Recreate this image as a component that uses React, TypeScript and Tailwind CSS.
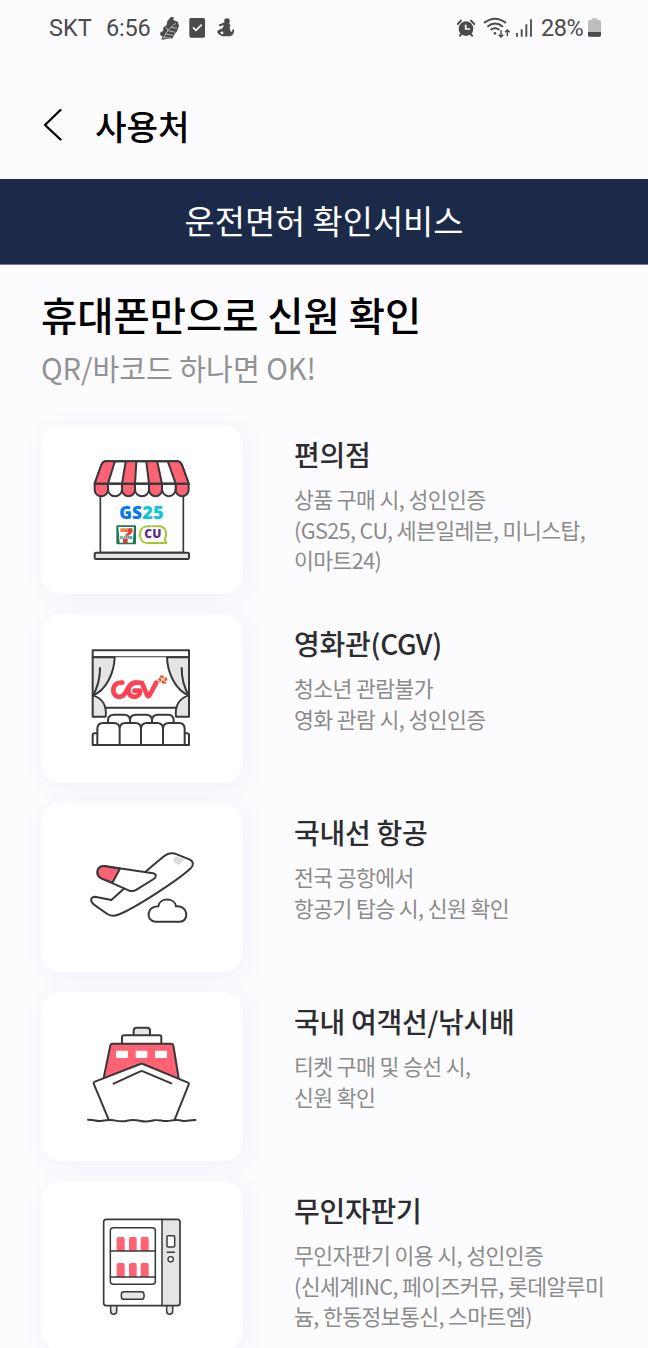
import type { ReactNode } from 'react'

type Place = {
  title: string
  lines: string[]
  viewBox: string
  art: ReactNode
}

const INK = '#38383a'
const PINK = '#ff6272'

const storeArt = (
  <>
    <path d="M61 130V308H310V130" fill="#fff" strokeWidth="5" />
    <path d="M78 34H290Q302 34 307 48L326 101H44L63 48Q68 34 78 34Z" fill="#fff" />
    <path d="M78 34H104L84 101H44L63 48Q68 34 78 34ZM137 34H169L165 101H126ZM199 34H232L246 101H207ZM264 34H290Q302 34 307 48L326 101H287Z" fill={PINK} stroke="none" />
    <path d="M44 101H84V119A20 20 0 0 1 44 119ZM126 101H165V119A19.500 19.500 0 0 1 126 119ZM207 101H246V119A19.500 19.500 0 0 1 207 119ZM287 101H326V119A19.500 19.500 0 0 1 287 119Z" fill={PINK} />
    <path d="M84 101H126V118A21 21 0 0 1 84 118ZM165 101H207V118A21 21 0 0 1 165 118ZM246 101H287V118A20.500 20.500 0 0 1 246 118Z" fill="#fff" />
    <path d="M78 34H290Q302 34 307 48L326 101H44L63 48Q68 34 78 34ZM104 36L84 101M137 36L126 101M169 36L165 101M199 36L207 101M232 36L246 101M264 36L287 101" />
    <rect x="44" y="308" width="283" height="19" rx="4" fill="#e5e5e5" />
    <g stroke="none" fontFamily="Open Sans, sans-serif" fontWeight="800">
      <text x="118" y="208" fontSize="54" textLength="68" lengthAdjust="spacingAndGlyphs" fill="#0878ed">GS</text>
      <text x="187" y="208" fontSize="54" textLength="64" lengthAdjust="spacingAndGlyphs" fill="#13c5d4">25</text>
      <rect x="109" y="226" width="59" height="57" rx="3" fill="#187a5b" />
      <path d="M115 231H162L158 278H119Z" fill="#fff" />
      <path d="M145 246H157L143 262V280H129V262Z" fill="#dc3b3f" />
      <path d="M121 235H157V246H121Z" fill="#f0803c" />
      <path d="M145 235H157V246H145Z" fill="#dc3b3f" />
      <rect x="118" y="257" width="41" height="10" fill="#fff" />
      <text x="120" y="266" fontSize="11" textLength="37" lengthAdjust="spacingAndGlyphs" fill="#187a5b">ELEVEN</text>
      <text x="193" y="265" fontSize="34" textLength="51" lengthAdjust="spacingAndGlyphs" fill="#5b2d87">CU</text>
    </g>
    <path d="M212 229H202C188 229 180 240 180 254S188 279 202 279H259L254 268C264 250 256 229 238 229H219" stroke="#a5c63b" />
  </>
)

const cinemaArt = (
  <>
    <rect x="38" y="31" width="289" height="21" fill="#fff" />
    <path d="M38 52H327V205H38Z" fill="#fff" stroke="none" />
    <path d="M38 52H104C103 98 78 151 39 166C68 175 81 199 77 230H38Z" fill="#e5e5e5" />
    <path d="M327 52H261C262 98 287 151 326 166C297 175 284 199 288 230H327Z" fill="#e5e5e5" />
    <path d="M39 166C53 142 60 115 60 84M326 166C312 142 305 115 305 84M76 203H289" />
    <path d="M84 250V242Q84 224 102 224H132Q150 224 150 242V250M150 250V242Q150 224 168 224H198Q216 224 216 242V250M216 250V242Q216 224 234 224H264Q281 224 281 242V250" fill="#fff" />
    <path d="M52 315H38V286Q38 280 44 280H52M314 315H327V286Q327 280 321 280H314" fill="#fff" />
    <path d="M52 315V267Q52 249 70 249H101Q119 249 119 267V315ZM119 315V267Q119 249 137 249H166Q183 249 183 267V315ZM183 315V267Q183 249 201 249H231Q249 249 249 267V315ZM249 315V267Q249 249 267 249H297Q314 249 314 267V315Z" fill="#fff" />
    {/* CGV wordmark strokes */}
    <g stroke="#fb4355" strokeWidth="14">
      <path d="M127 128C109 125 100 138 100 151C100 166 112 173 125 169C142 163 140 131 166 128H178" />
      <path d="M166 128C139 131 139 170 161 170C176 170 181 160 180 152H163" />
      <path d="M186 129L201 165Q205 173 209 165L229 128" />
    </g>
    <g strokeWidth="5">
      <path d="M248 108V113M248 123V128" stroke="#e9443e" />
      <path d="M239 114L243 117M253 121L258 124M258 113L253 116M243 121L239 125" stroke="#f08a3c" />
      <path d="M242 109L246 111M257 118H260M250 127L255 129M237 119H240" stroke="#d8463d" />
    </g>
  </>
)

const flightArt = (
  <>
    <path d="M198 124L248 82C261 70 278 67 291 73L328 88C342 94 341 106 332 115C292 153 151 243 112 255C101 259 91 257 82 252L45 226C29 216 30 201 45 200L94 210L130 178Z" fill="#fff" />
    <path d="M279 88L290 78L315 88L296 105L281 97Z" fill="#dcdcdc" stroke="none" />
    <path d="M72 108L219 130C230 132 230 141 221 147L171 178C162 184 156 186 146 181L66 146C45 136 49 109 72 108Z" fill="#fff" />
    <path d="M72 108L120 116L97 158L66 146C45 136 49 109 72 108Z" fill={PINK} />
    <path d="M226 275C198 275 197 228 235 229C238 202 285 202 288 229C327 226 327 275 300 275Z" fill="#fff" />
  </>
)

const shipArt = (
  <>
    <path d="M161 61V47Q161 38 170 38H201Q210 38 210 47V61" fill="#e5e5e5" />
    <path d="M126 86V67Q126 61 132 61H238Q244 61 244 67V86" fill="#fff" />
    <path d="M71 189L91 91Q92 86 98 86H273Q279 86 280 91L296 189Z" fill={PINK} />
    <g fill="#fff" stroke="none">
      <rect x="108" y="107" width="36" height="22" rx="3" />
      <rect x="167" y="107" width="35" height="22" rx="3" />
      <rect x="225" y="107" width="36" height="22" rx="3" />
    </g>
    <path d="M86 314L41 206Q40 202 45 200L181 147Q185 145 189 147L324 203Q328 205 326 209L284 314" fill="#fff" />
    <path d="M101 206L181 169Q185 167 189 169L274 205" />
    <path d="M24 314C46 314 47 320 61 318S88 314 101 316S125 321 141 317S166 314 183 318S207 319 222 316S247 320 263 318S290 313 306 317S329 314 346 315" />
  </>
)

const vendingArt = (
  <>
    <path d="M62 302V319Q62 328 71 328T80 319V302M230 302V319Q230 328 239 328T248 319V302" fill="#e5e5e5" strokeWidth="4.500" />
    <path d="M216 43H261Q270 43 270 52V293Q270 302 261 302H216Z" fill="#e5e5e5" stroke="none" />
    <path d="M216 43H50Q41 43 41 52V293Q41 302 50 302H216Z" fill="#fff" stroke="none" />
    <rect x="41" y="43" width="229" height="259" rx="8" strokeWidth="5" />
    <path d="M216 43V302" strokeWidth="4.500" />
    <rect x="61" y="68" width="135" height="170" rx="9" strokeWidth="4.500" />
    <g fill={PINK} stroke="none">
      <path d="M80 138V101Q80 96 85 96H99Q104 96 104 101V138ZM117 138V101Q117 96 122 96H135Q140 96 140 101V138ZM152 138V101Q152 96 157 96H171Q176 96 176 101V138Z" />
      <path d="M80 216V180Q80 174 85 174H99Q104 174 104 180V216ZM117 216V180Q117 174 122 174H135Q140 174 140 180V216ZM152 216V180Q152 174 157 174H171Q176 174 176 180V216Z" />
    </g>
    <path d="M61 138H196M61 216H196M232 142H253" strokeWidth="4.500" />
    <rect x="94" y="260" width="68" height="23" rx="8" fill="#e5e5e5" strokeWidth="4.500" />
    <rect x="231" y="92" width="23" height="34" rx="3" fill="#fff" strokeWidth="4.500" />
    <circle cx="242" cy="163" r="8" fill="#fff" strokeWidth="4" />
  </>
)

const places: Place[] = [
  {
    title: '편의점',
    lines: ['상품 구매 시, 성인인증', '(GS25, CU, 세븐일레븐, 미니스탑,', '이마트24)'],
    viewBox: '-117 -75 606 507',
    art: storeArt,
  },
  {
    title: '영화관(CGV)',
    lines: ['청소년 관람불가', '영화 관람 시, 성인인증'],
    viewBox: '-117 -78 606 507',
    art: cinemaArt,
  },
  {
    title: '국내선 항공',
    lines: ['전국 공항에서', '항공기 탑승 시, 신원 확인'],
    viewBox: '-117 -81 606 507',
    art: flightArt,
  },
  {
    title: '국내 여객선/낚시배',
    lines: ['티켓 구매 및 승선 시,', '신원 확인'],
    viewBox: '-117 -69 606 507',
    art: shipArt,
  },
  {
    title: '무인자판기',
    lines: ['무인자판기 이용 시, 성인인증', '(신세계INC, 페이즈커뮤, 롯데알루미', '늄, 한동정보통신, 스마트엠)'],
    viewBox: '-147 -72 606 507',
    art: vendingArt,
  },
]

function StatusBar() {
  return (
    <div className="flex h-[58px] items-center pl-[49px] pr-[47px] font-[Roboto,sans-serif] text-[23.5px] leading-none text-[#4b4b4d]">
      <span className="w-[57px]">SKT</span>
      <span className="w-[53px] tracking-[-0.2px]">6:56</span>
      <svg className="h-6 w-[21px]" viewBox="477 51 63 72">
        <path d="M510 54L515 48L521 52L520 60L533 65L537 77L531 94L522 105L518 115L484 119L488 110L480 104L482 96L490 93L489 84L500 75L502 63Z" fill="#4b4b4d" />
        <path d="M528 70Q505 83 491 114M504 92L499 82M514 82L531 85M505 92L526 97M497 102L520 106M491 113L514 114" fill="none" stroke="#fcfcfe" strokeWidth="1.800" />
      </svg>
      <svg className="ml-[9px] h-6 w-4" viewBox="569 51 48 72">
        <rect x="570" y="54" width="47" height="59" rx="5" fill="#4b4b4d" />
        <path d="M581 82L590 91L607 74" fill="none" stroke="#fff" strokeWidth="5" />
      </svg>
      <svg className="ml-3 h-6 w-[17px]" viewBox="652 51 51 72">
        <circle cx="682" cy="63" r="8.500" fill="#4b4b4d" />
        <path d="M657 74L671 68L678 67H687L692 76L690 85L693 94L698 97L697 90L702 88L704 95L699 104L692 109H668L657 103L652 96L656 90L666 86L671 81L672 76L659 79Z" fill="#4b4b4d" />
        <path d="M662 97L669 94L672 101L665 103Z" fill="#fcfcfe" />
      </svg>
      <svg className="ml-auto h-6 w-[18px]" viewBox="399 51 54 72">
        <circle cx="426" cy="86" r="22" fill="#4b4b4d" />
        <path d="M401 72L411 62M451 72L441 62M408 107L413 101M444 107L439 101" stroke="#4b4b4d" strokeWidth="6" strokeLinecap="round" />
        <path d="M425 74V87H438" fill="none" stroke="#fff" strokeWidth="5" />
      </svg>
      <svg className="ml-[8px] h-6 w-[27px]" viewBox="477 51 81 72" fill="none" stroke="#4b4b4d">
        <path d="M480 69Q513 43 546 69M490 80Q513 61 537 80M500 90Q513 80 526 90" strokeWidth="6" />
        <circle cx="513" cy="100" r="4" fill="#4b4b4d" stroke="none" />
        <path d="M531 91V110M524 104L531 111L538 104M550 108V90M543 97L550 90L557 97" strokeWidth="4.500" />
      </svg>
      <svg className="ml-[6px] h-6 w-[17px]" viewBox="576 51 51 72" stroke="#4b4b4d" strokeWidth="5.500">
        <path d="M579 99V110M593 88V110M607 73V110M621 58V110" />
      </svg>
      <span className="ml-[8px] w-[46px] tracking-[-0.5px]">28%</span>
      <svg className="ml-px h-6 w-[13px]" viewBox="792 51 39 72">
        <path d="M803 55H819V60H826Q831 60 831 65V105Q831 110 826 110H797Q792 110 792 105V65Q792 60 797 60H803Z" fill="#bdbdbf" />
        <path d="M792 96H831V105Q831 110 826 110H797Q792 110 792 105Z" fill="#4b4b4d" />
      </svg>
    </div>
  )
}

function PlaceRow({ title, lines, viewBox, art }: Place) {
  return (
    <li className="flex h-[169px] gap-[51px]">
      <div className="w-[202px] shrink-0 rounded-[20px] bg-white shadow-[4px_4px_24px_rgba(90,70,200,0.06)]">
        <svg
          className="h-full w-full"
          viewBox={viewBox}
          fill="none"
          stroke={INK}
          strokeWidth="6"
          strokeLinecap="round"
          strokeLinejoin="round"
        >
          {art}
        </svg>
      </div>
      <div className="pt-2">
        <h3 className="text-[28px] font-medium leading-[42px] tracking-[-0.01em] text-[#2d2d2f]">{title}</h3>
        <p className="mt-[9px] whitespace-nowrap text-[21.600px] leading-[30.600px] tracking-[-0.028em] text-[#8b8b8b]">
          {lines.map((line) => (
            <span key={line} className="block">{line}</span>
          ))}
        </p>
      </div>
    </li>
  )
}

export default function App() {
  return (
    <div className="h-[1348px] w-[648px] overflow-hidden bg-[#fcfcfe] font-['Noto_Sans_CJK_KR',sans-serif]">
      <StatusBar />
      <header className="flex h-[121px] items-center gap-[33px] pl-[43px] pt-[12px]">
        <svg className="h-8 w-[19px]" viewBox="0 0 19 32" fill="none" stroke="#000" strokeWidth="2.300" strokeLinecap="round" strokeLinejoin="round">
          <path d="M17.500 1L2 16L17.500 30.500" />
        </svg>
        <h1 className="text-[34.300px] font-medium leading-[50px] text-black">사용처</h1>
      </header>
      <div className="flex h-[86px] items-center justify-center border-b border-[#787f90] bg-[#1c2a4a] pb-[4px] text-[32.800px] leading-[50px] text-white">
        운전면허 확인서비스
      </div>
      <main className="px-[41px] pt-[19px]">
        <h2 className="text-[39.400px] font-medium leading-[60px] text-black">휴대폰만으로 신원 확인</h2>
        <p className="mt-px text-[29.200px] leading-[44px] tracking-[-0.002em] text-[#929292]">QR/바코드 하나면 OK!</p>
        <ul className="mt-[36px] flex flex-col gap-[20px]">
          {places.map((place) => (
            <PlaceRow key={place.title} {...place} />
          ))}
        </ul>
      </main>
    </div>
  )
}
